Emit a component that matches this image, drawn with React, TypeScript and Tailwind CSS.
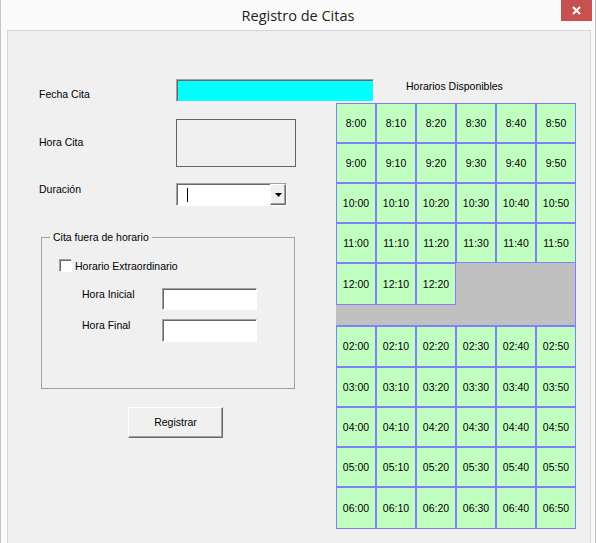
const pad = (n: number) => String(n).padStart(2, "0");
const MINUTES = [0, 10, 20, 30, 40, 50];

const morningRows = [8, 9, 10, 11].map((h) => MINUTES.map((m) => `${h}:${pad(m)}`));
const noonRow = [0, 10, 20].map((m) => `12:${pad(m)}`);
const afternoonRows = [2, 3, 4, 5, 6].map((h) => MINUTES.map((m) => `${pad(h)}:${pad(m)}`));

const sunken =
  "border border-t-[#a0a0a0] border-l-[#a0a0a0] border-r-white border-b-white shadow-[inset_1px_1px_0_#696969]";
const raised =
  "border border-t-white border-l-white border-r-[#696969] border-b-[#696969] shadow-[inset_-1px_-1px_0_#a0a0a0]";

function Cell({ label, height }: { label: string; height: string }) {
  return (
    <div
      className={`flex items-center justify-center border border-[#8080ff] bg-[#c0ffc0] text-[10.5px] text-black ${height}`}
    >
      {label}
    </div>
  );
}

function TimeGrid() {
  return (
    <div className="flex w-[240px] flex-col">
      {/* mañana: la zona gris queda a la vista donde faltan celdas */}
      <div className="grid h-[223px] w-[240px] grid-cols-6 content-start bg-[#c0c0c0] shadow-[inset_-1px_-1px_0_#8080ff]">
        {morningRows.flat().map((t) => (
          <Cell key={t} label={t} height="h-10" />
        ))}
        {noonRow.map((t) => (
          <Cell key={t} label={t} height="h-[42px]" />
        ))}
      </div>
      <div className="grid w-[240px] grid-cols-6">
        {afternoonRows.map((row, i) =>
          row.map((t) => (
            <Cell
              key={t}
              label={t}
              height={i === 0 ? "h-[41px]" : i === 4 ? "h-[42px]" : "h-10"}
            />
          ))
        )}
      </div>
    </div>
  );
}

export default function App() {
  return (
    <div className="h-[543px] w-[596px] overflow-hidden border-x border-[#c4c4c4] bg-[#fafafa] font-['Liberation_Sans',Arial,sans-serif] text-black">
      {/* barra de título */}
      <div className="flex h-[30px] items-start">
        <div className="w-[34px]" />
        <div className="flex-1 pt-[6px] text-center font-['Open_Sans','Noto_Sans',sans-serif] text-[14.5px] leading-[20px] text-[#222]">
          Registro de Citas
        </div>
        <div className="mr-[3px] flex h-[21px] w-[31px] items-center justify-center bg-[#c75050]">
          <svg width="9" height="9" viewBox="0 0 9 9">
            <path d="M1 1L8 8M8 1L1 8" stroke="white" strokeWidth="2" />
          </svg>
        </div>
      </div>

      <div className="ml-[6px] h-[520px] w-[584px] border border-[#d6d6d6] bg-[#f0f0f0] text-[10.5px] leading-[13px]">
        {/* fila fecha */}
        <div className="mt-[48px] flex h-[24px] items-start">
          <div className="ml-[31px] mt-[9px] w-[137px]">Fecha Cita</div>
          <div className={`h-[23px] w-[198px] bg-[#00ffff] ${sunken}`} />
          <div className="ml-[32px] mt-[1px]">Horarios Disponibles</div>
        </div>

        <div className="flex">
          <div className="flex w-[328px] flex-col pl-[31px]">
            <div className="mt-[16px] flex items-start">
              <div className="mt-[17px] w-[137px]">Hora Cita</div>
              <div className="h-[48px] w-[120px] border border-[#646464]" />
            </div>

            <div className="mt-[16px] flex items-start">
              <div className="w-[137px]">Duración</div>
              <div className={`flex h-[23px] w-[111px] items-stretch bg-white ${sunken}`}>
                <div className="flex flex-1 items-center">
                  <div className="ml-[10px] h-[14px] w-px bg-black" />
                </div>
                <div className={`flex w-[16px] items-center justify-center bg-[#f0f0f0] ${raised}`}>
                  <svg width="7" height="4" viewBox="0 0 7 4">
                    <path d="M0 0H7L3.5 4Z" fill="black" />
                  </svg>
                </div>
              </div>
            </div>

            <fieldset className="ml-[2px] mt-[25px] h-[158px] w-[254px] border border-[#a0a0a0] p-0">
              <legend className="ml-[8px] px-[3px]">Cita fuera de horario</legend>
              <div className="ml-[17px] mt-[15px] flex items-start">
                <div className={`h-[13px] w-[13px] bg-white ${sunken}`} />
                <div className="ml-[3px] mt-[1px]">Horario Extraordinario</div>
              </div>
              <div className="ml-[40px] mt-[15px] flex items-start">
                <div className="w-[80px]">Hora Inicial</div>
                <div className={`h-[22px] w-[95px] bg-white ${sunken}`} />
              </div>
              <div className="ml-[40px] mt-[9px] flex items-start">
                <div className="w-[80px]">Hora Final</div>
                <div className={`h-[23px] w-[95px] bg-white ${sunken}`} />
              </div>
            </fieldset>

            <button
              className={`ml-[89px] mt-[18px] flex h-[31px] w-[95px] items-center justify-center bg-[#f0f0f0] ${raised}`}
            >
              Registrar
            </button>
          </div>

          <TimeGrid />
        </div>
      </div>
    </div>
  );
}
